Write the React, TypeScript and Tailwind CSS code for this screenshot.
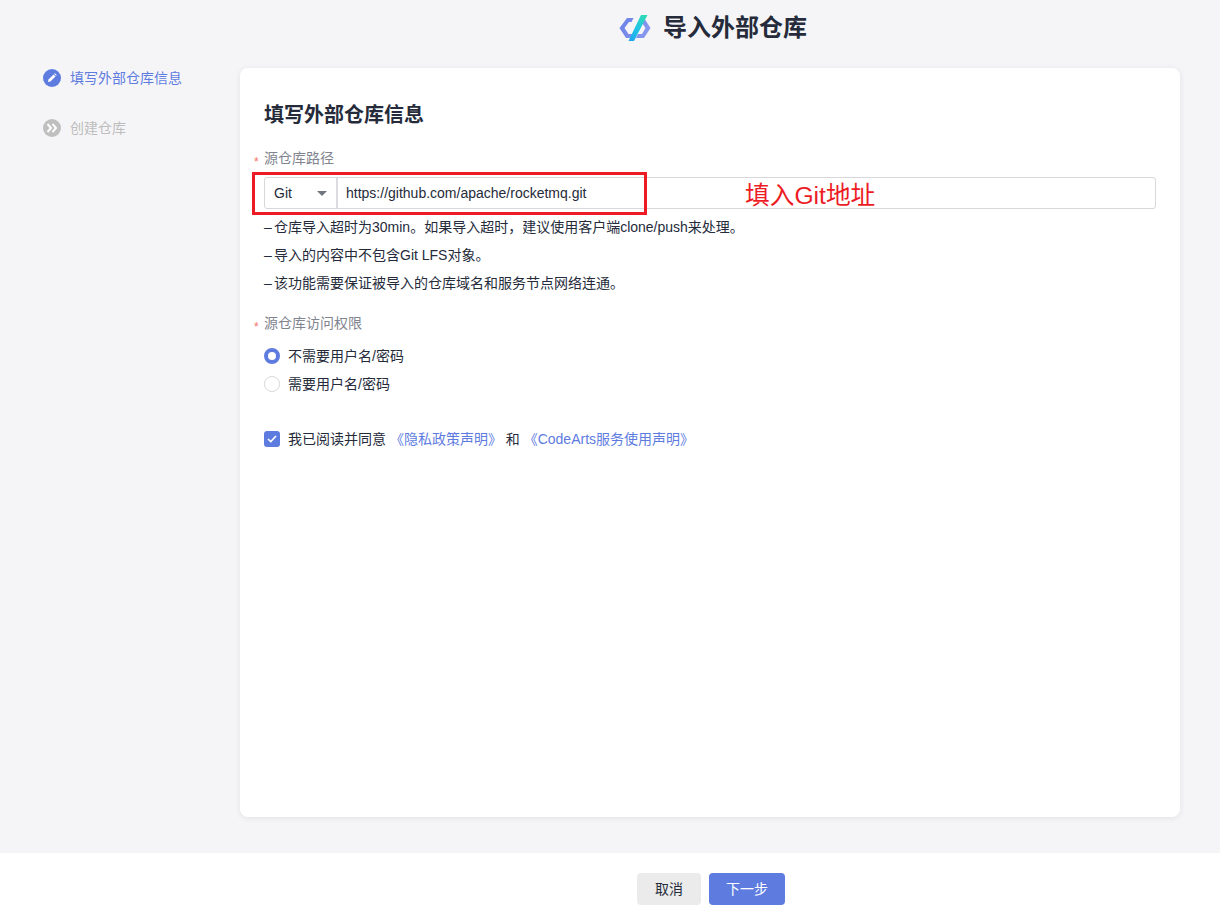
import React from 'react';

const Logo = () => (
  <svg width="32" height="28" viewBox="0 0 32 28" fill="none">
    <defs>
      <linearGradient id="slash" x1="27" y1="1" x2="11" y2="27" gradientUnits="userSpaceOnUse">
        <stop offset="0" stopColor="#2fdcb0" />
        <stop offset="0.5" stopColor="#22c6e4" />
        <stop offset="1" stopColor="#1fa4ee" />
      </linearGradient>
      <linearGradient id="chev" x1="0" y1="5" x2="32" y2="24" gradientUnits="userSpaceOnUse">
        <stop offset="0" stopColor="#6a80e6" />
        <stop offset="1" stopColor="#8d9cf0" />
      </linearGradient>
    </defs>
    <path d="M14.5 4H8L0.5 14L7 24H11.5L13.5 20H9.5L5.5 14L10 8H12.5Z" fill="url(#chev)" />
    <path d="M22 4H25L31.5 14L25 24H17L19 20H23L26.5 14L22.5 8H20.5Z" fill="url(#chev)" />
    <path d="M22 1H28.5L15 27H9.5Z" fill="url(#slash)" />
  </svg>
);

const Required = ({ children }: { children: React.ReactNode }) => (
  <div className="flex items-center h-5 text-sm text-[#81848f]">
    <span className="w-[10px] -ml-[10px] text-xs text-[#f66f6a] pt-[7px]">*</span>
    {children}
  </div>
);

const StepIcon = ({ done }: { done: boolean }) => (
  <span className={`flex items-center justify-center w-[18px] h-[18px] rounded-full ${done ? 'bg-[#5e7ce0]' : 'bg-[#bfbfbf]'}`}>
    {done ? (
      <svg width="10" height="10" viewBox="0 0 10 10" fill="#fff">
        <path d="M1 9L1.5 6.6L6.6 1.5L8.5 3.4L3.4 8.5Z" />
        <path d="M7.2 0.9L7.9 0.3L9.7 2.1L9.1 2.8Z" />
      </svg>
    ) : (
      <svg width="12" height="10" viewBox="0 0 12 10" fill="none" stroke="#fff" strokeWidth="2">
        <path d="M1.5 1L5 5L1.5 9" />
        <path d="M6.5 1L10 5L6.5 9" />
      </svg>
    )}
  </span>
);

const HelpLine = ({ children }: { children: React.ReactNode }) => (
  <li className="flex items-center h-7">
    <span className="w-[10px] shrink-0">–</span>
    {children}
  </li>
);

export default function App() {
  return (
    <div
      className="relative flex flex-col h-[919px] bg-[#f5f5f7] overflow-hidden"
      style={{ fontFamily: '"Liberation Sans", "Noto Sans CJK SC", sans-serif' }}
    >
      <header className="flex items-center justify-center gap-3 h-[56px] ml-[243px] w-[940px] shrink-0">
        <Logo />
        <h1 className="text-2xl font-bold text-[#252b3a]">导入外部仓库</h1>
      </header>

      <div className="flex flex-1 min-h-0">
        {/* Steps */}
        <aside className="w-[240px] shrink-0 pl-[43px] pt-[12px] text-sm">
          <div className="flex items-center gap-[9px] h-5 text-[#5e7ce0]">
            <StepIcon done />
            <span>填写外部仓库信息</span>
          </div>
          <div className="flex items-center gap-[9px] h-5 mt-[30px] text-[#bdbdbd]">
            <StepIcon done={false} />
            <span>创建仓库</span>
          </div>
        </aside>

        {/* Form card */}
        <main className="relative w-[940px] h-[749px] mt-[12px] bg-white rounded-lg shadow-[0_1px_6px_rgba(0,0,0,0.08)] pt-[33px] pl-[24px] pr-[24px]">
          <h2 className="text-xl leading-7 font-bold text-[#252b3a]">填写外部仓库信息</h2>

          <div className="mt-[19px]">
            <Required>源仓库路径</Required>
          </div>
          <div className="flex h-8 mt-[9px] border border-[#d8d8dc] rounded-[3px] text-sm text-[#252b3a]">
            <div className="flex items-center justify-between w-[73px] pl-[9px] pr-[9px] border-r-2 border-[#dcdce0]">
              <span>Git</span>
              <span className="w-0 h-0 border-x-[5px] border-x-transparent border-t-[5px] border-t-[#71757f]" />
            </div>
            <div className="flex items-center pl-2">https://github.com/apache/rocketmq.git</div>
          </div>

          <ul className="mt-[4px] text-sm text-[#252b3a]">
            <HelpLine>仓库导入超时为30min。如果导入超时，建议使用客户端clone/push来处理。</HelpLine>
            <HelpLine>导入的内容中不包含Git LFS对象。</HelpLine>
            <HelpLine>该功能需要保证被导入的仓库域名和服务节点网络连通。</HelpLine>
          </ul>

          <div className="mt-[16px]">
            <Required>源仓库访问权限</Required>
          </div>

          <div className="mt-[9px] text-sm text-[#252b3a]">
            <label className="flex items-center gap-2 h-7">
              <span className="w-4 h-4 rounded-full border-[4px] border-[#5e7ce0] bg-white" />
              不需要用户名/密码
            </label>
            <label className="flex items-center gap-2 h-7">
              <span className="w-4 h-4 rounded-full border border-[#d9d9d9] bg-white" />
              需要用户名/密码
            </label>
          </div>

          <div className="flex items-center gap-2 mt-[31px] h-5 text-sm text-[#252b3a]">
            <span className="flex items-center justify-center w-4 h-4 rounded-[3px] bg-[#5e7ce0]">
              <svg width="10" height="8" viewBox="0 0 10 8" fill="none" stroke="#fff" strokeWidth="1.6">
                <path d="M1 4L3.8 6.6L9 1" />
              </svg>
            </span>
            <span>
              我已阅读并同意 <span className="text-[#5e7ce0]">《隐私政策声明》</span> 和{' '}
              <span className="text-[#5e7ce0]">《CodeArts服务使用声明》</span>
            </span>
          </div>

          {/* Annotation drawn over the form */}
          <div className="absolute left-[12px] top-[104px] w-[395px] h-[43px] border-[3px] border-[#ed1c24]" />
          <div className="absolute left-[505px] top-[109px] text-[24.7px] text-[#ed1c24] whitespace-nowrap">填入Git地址</div>
        </main>
      </div>

      <footer className="flex items-center justify-center gap-2 h-[66px] shrink-0 bg-white pl-[202px] pt-[6px] text-sm">
        <button className="w-16 h-8 rounded bg-[#ebebeb] text-[#252b3a]">取消</button>
        <button className="w-[76px] h-8 rounded bg-[#5e7ce0] text-white">下一步</button>
      </footer>
    </div>
  );
}
